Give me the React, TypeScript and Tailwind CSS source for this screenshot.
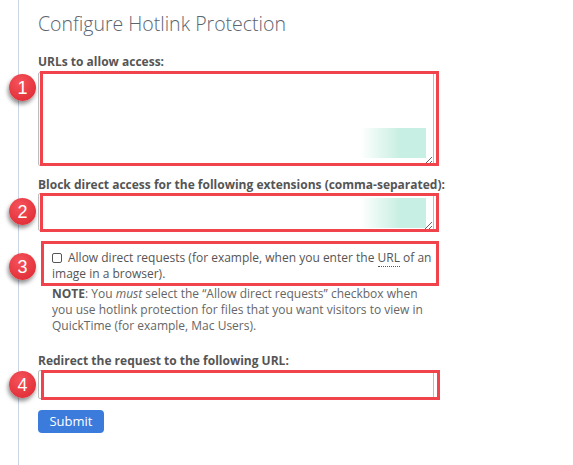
import React from 'react';

const Badge = ({ n, top }: { n: number; top: string }) => (
  <div
    className={`absolute -left-[29px] ${top} w-[27px] h-[27px] rounded-full bg-[radial-gradient(circle_at_40%_30%,#f5525a,#dc2630)] shadow-[-1px_3px_4px_rgba(0,0,0,0.45)] flex items-center justify-center text-white text-[18px] font-['Liberation_Sans',sans-serif] leading-none z-10`}
  >
    {n}
  </div>
);

const Mark = ({ className }: { className: string }) => (
  <div className={`absolute border-[3px] border-[#f0434b] pointer-events-none ${className}`} />
);

const Fade = ({ className }: { className: string }) => (
  <div
    className={`absolute w-[66px] bg-[linear-gradient(to_right,rgba(200,239,227,0),#c8efe3_60%)] pointer-events-none ${className}`}
  />
);

export default function App() {
  return (
    <div className="w-[573px] h-[465px] bg-white overflow-hidden font-['Open_Sans',sans-serif] text-[#555]">
      <div className="ml-[18px] h-[468px] border-l border-b border-[#c9d4e4] rounded-bl-[4px] pl-[19px] flex flex-col items-start">
        <h1 className="pt-[10px] text-[19.5px] leading-[28px] font-light text-[#5b6570]">
          Configure Hotlink Protection
        </h1>

        <label className="mt-[16px] text-[12px] leading-[16px] font-bold text-[#555]">URLs to allow access:</label>
        <div className="relative mt-[2px] w-[396px] h-[94px]">
          <textarea className="block w-full h-full border border-[#bdbdbd] rounded-[2px] outline-none" />
          <Fade className="left-[322px] top-[56px] h-[30px]" />
          <Mark className="left-[2px] -top-[1px] w-[399px] h-[95px]" />
          <Badge n={1} top="top-[2px]" />
        </div>

        <label className="mt-[11px] text-[12px] leading-[16px] font-bold text-[#555]">
          Block direct access for the following extensions (comma-separated):
        </label>
        <div className="relative w-[396px] h-[38px]">
          <textarea className="block w-full h-full border border-[#bdbdbd] rounded-[2px] outline-none" />
          <Fade className="left-[322px] top-[5px] h-[30px]" />
          <Mark className="left-[2px] top-0 w-[399px] h-[39px]" />
          <Badge n={2} top="top-[5px]" />
        </div>

        <div className="relative mt-[10px] w-[401px] pt-[9px] pb-[4px] pl-[14px] text-[12px] leading-[16px] text-[#555]">
          <label className="block">
            <input
              type="checkbox"
              className="appearance-none inline-block align-[-1px] w-[10px] h-[10px] border border-[#555] rounded-[2px] mr-[6px] bg-white"
            />
            Allow direct requests (for example, when you enter the{' '}
            <abbr className="no-underline border-b border-dotted border-[#555]">URL</abbr> of an image in a browser).
          </label>
          <Mark className="left-[3px] top-0 w-[398px] h-[45px]" />
          <Badge n={3} top="top-[12px]" />
        </div>

        <p className="pl-[14px] w-[394px] text-[12px] leading-[16px] text-[#666]">
          <strong className="font-bold text-[#555]">NOTE</strong>: You <em>must</em> select the “Allow direct requests”
          checkbox when you use hotlink protection for files that you want visitors to view in QuickTime (for example,
          Mac Users).
        </p>

        <label className="mt-[19px] text-[12px] leading-[16px] font-bold text-[#555]">
          Redirect the request to the following URL:
        </label>
        <div className="relative mt-[1px] w-[396px] h-[29px]">
          <input type="text" className="block w-full h-full border border-[#bdbdbd] rounded-[2px] outline-none" />
          <Mark className="left-[3px] top-0 w-[399px] h-[30px]" />
          <Badge n={4} top="top-[1px]" />
        </div>

        <button className="mt-[11px] w-[66px] h-[23px] rounded-[4px] bg-[#3a7bdc] text-white text-[13px] leading-[23px]">
          Submit
        </button>
      </div>
    </div>
  );
}
